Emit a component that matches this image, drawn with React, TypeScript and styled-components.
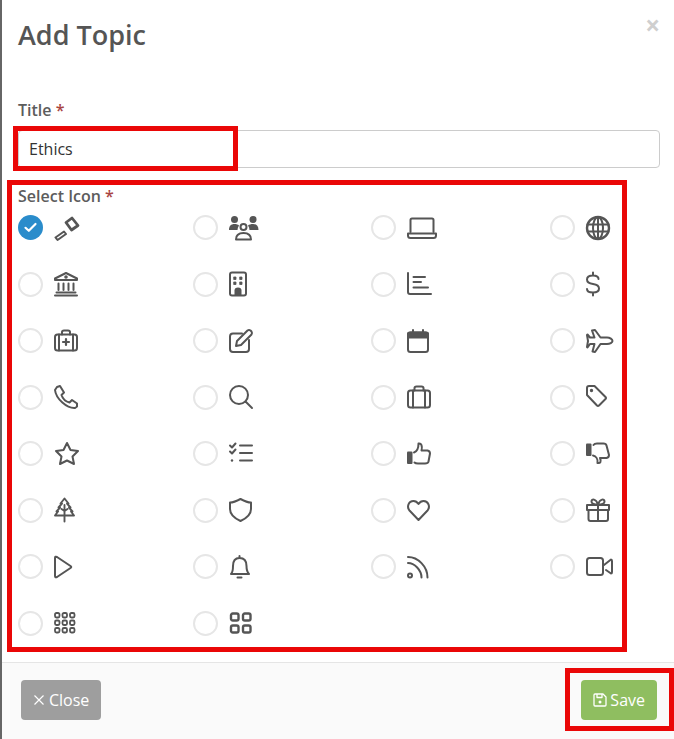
import { FC, ReactNode } from 'react'
import styled, { createGlobalStyle } from 'styled-components'

const GlobalStyle = createGlobalStyle`
  html, body {
    margin: 0;
    padding: 0;
    background: #666;
  }
  * {
    box-sizing: border-box;
  }
`

const Glyph: FC<{ children: ReactNode }> = ({ children }) => (
  <svg
    width={26}
    height={26}
    viewBox="0 0 26 26"
    fill="none"
    stroke="#555"
    strokeWidth="2"
    strokeLinecap="round"
    strokeLinejoin="round"
  >
    {children}
  </svg>
)

// hand drawn to follow the reference, all on a 26 box whose left edge is the icon's left edge
const icons: ReactNode[] = [
  <>
    <path d="M12 7.500 18 3 24 10.500 17.500 15Z" strokeWidth="2.800" />
    <path d="M1.500 22.500 10 16.500 12 19 3.500 25Z" strokeWidth="2" />
  </>,
  <>
    <circle cx="5.500" cy="4.500" r="3.500" fill="#555" stroke="none" />
    <circle cx="24" cy="4.500" r="3.500" fill="#555" stroke="none" />
    <path d="M0 15C0 11 2 9 5.500 9 7.500 9 9 9.500 10 10.500 9 12 8.500 13.500 8.500 15Z" fill="#555" stroke="none" />
    <path d="M20.500 15C20.500 13.500 20 12 19 10.500 20 9.500 22 9 24 9 27.500 9 29.500 11 29.500 15Z" fill="#555" stroke="none" />
    <circle cx="14.500" cy="12" r="3" />
    <path d="M7 24.500C7 20 10 18 14.500 18 19 18 22 20 22 24.500Z" />
  </>,
  <>
    <path d="M3.500 17V5Q3.500 3.500 5 3.500H25Q26.500 3.500 26.500 5V17" />
    <path d="M1 18.500H29V20.500Q29 23 26.500 23H3.500Q1 23 1 20.500Z" />
  </>,
  <>
    <circle cx="12" cy="13" r="11" strokeWidth="2.400" />
    <ellipse cx="12" cy="13" rx="5" ry="11" />
    <path d="M1.500 9.500H22.500M1.500 16.500H22.500M12 2V24" />
  </>,
  <>
    <path d="M1 7.500 12 2 23 7.500V9H1Z" />
    <path d="M4.500 12.500V19M9.500 12.500V19M14.500 12.500V19M19.500 12.500V19M2.500 21.500H21.500M1 24.500H23" />
    <circle cx="12" cy="6" r="0.800" fill="#555" />
  </>,
  <>
    <rect x="1" y="1.500" width="16" height="23" rx="2" />
    <path d="M5 6H7V8.500H5ZM11 6H13V8.500H11ZM5 11H7V13.500H5ZM11 11H13V13.500H11Z" fill="#555" stroke="#555" strokeWidth="0.800" />
    <path d="M5.500 24V19.500Q5.500 16.500 9 16.500 12.500 16.500 12.500 19.500V24Z" fill="#555" stroke="none" />
  </>,
  <>
    <path d="M1 2V21Q1 23 3 23H24" />
    <path d="M6.500 6H18M6.500 11H14M6.500 16.500H21" />
  </>,
  <>
    <path d="M12.500 8C12.500 5.500 10.500 4.500 7 4.500 3 4.500 1 6 1 8.500 1 11.500 3.500 12.500 7 13 10.500 13.500 13 14.500 13 17.500 13 20 11 21.500 7 21.500 3 21.500 1 20 1 18M7 1.500V4.500M7 21.500V24.500" />
  </>,
  <>
    <rect x="1" y="6.500" width="22" height="16" rx="2.500" />
    <path d="M8 6.500V4Q8 2.500 10 2.500H14Q16 2.500 16 4V6.500M5 6.500V22.500M19 6.500V22.500" />
    <path d="M12 11V17M9 14H15" strokeWidth="2.200" />
  </>,
  <>
    <path d="M13 5.500H4Q1 5.500 1 8.500V21Q1 24 4 24H17Q20 24 20 21V12" />
    <path d="M8 13 18.500 2.500Q20 1.500 21.500 2.500L22.500 3.500Q23.500 5 22.500 6.500L12 17 7 18Z" />
  </>,
  <>
    <rect x="1" y="4.500" width="20" height="19.500" rx="2.500" />
    <path d="M1 5.500Q1 4.500 3.500 4.500H18.500Q21 4.500 21 5.500V9.500H1Z" fill="#555" />
    <path d="M6 2V5M16 2V5" />
  </>,
  <>
    <path d="M6 2.500 9 2 14.500 9.500H21C24 9.500 26.500 11.500 26.500 13 26.500 14.500 24 16 21 16H14.500L9 24 6.500 23.500 8.500 16H4L1.500 19.500 1 19 2 13 1 7 1.500 6.500 4 9.500H8.500Z" />
  </>,
  <>
    <path d="M3 3 6 2 10 8.500 7.500 11C8.500 14 11.500 17.500 15.500 18.500L18 16 23 19.500 23 22.500 21 24C13 24.500 2 15 1 6Z" />
  </>,
  <>
    <circle cx="10" cy="11" r="9" />
    <path d="M16.500 17.500 23 24" />
  </>,
  <>
    <rect x="1" y="6.500" width="22" height="17" rx="2.500" />
    <path d="M7.500 6.500V4Q7.500 2.500 9.500 2.500H14.500Q16.500 2.500 16.500 4V6.500M6 6.500V23.500M18 6.500V23.500" />
  </>,
  <>
    <path d="M1 4Q1 2 3 2H8.500L19.500 13Q20.500 14 19.500 15L13 21.500Q12 22.500 11 21.500L1 11Z" />
    <circle cx="5.500" cy="6.500" r="0.700" fill="#555" />
  </>,
  <>
    <path d="M13 2 16.500 9 24 10 18.500 15.500 20 23 13 19.500 6 23 7.500 15.500 2 10 9.500 9Z" />
  </>,
  <>
    <path d="M1 4.500 3 6.500 6.500 2.500M1 10.500 3 12.500 6.500 8.500" />
    <path d="M11 4.500H23M11 12H23M11 19.500H23" />
    <circle cx="3" cy="19.500" r="1.200" fill="#555" stroke="none" />
  </>,
  <>
    <rect x="0" y="10.500" width="5.500" height="12.500" rx="1" fill="#555" stroke="none" />
    <path d="M7 11.500C10 10.500 11.500 8 11.500 2.500 14.500 2 15.500 5 14.500 9.500H20.500Q23 10 23 12.500L21.500 20.500Q21 22.500 18 22.500H11Q8.500 22.500 7.500 21.500" />
  </>,
  <>
    <rect x="0" y="2.500" width="5.500" height="12.500" rx="1" fill="#555" stroke="none" />
    <path d="M7 14.500C10 15 12 18 11.500 22 14.500 22.500 15.500 20.500 14 17H20.500Q23 16.500 23 14L20.500 4.500Q20 2.500 17.500 2.500H11Q8.500 2.500 7.500 4" />
  </>,
  <>
    <path d="M10.500 1.500 14.500 6.500H13L16.500 10.500H15L18.500 14.500H17L20 18.500H1L4 14.500H2.500L6 10.500H4.500L8 6.500H6.500ZM10.500 8V24.500M10.500 14 7.500 12M10.500 14 13.500 12" strokeWidth="1.900" />
  </>,
  <>
    <path d="M11.500 2Q5 5.500 1 5.500V12C1 17.500 6 21.500 11.500 24 17 21.500 22 17.500 22 12V5.500Q18 5.500 11.500 2Z" />
  </>,
  <>
    <path d="M11.500 23 2.500 13.500C-0.500 10 1.500 4 6.500 4 8.500 4 10.500 5.500 11.500 7 12.500 5.500 14.500 4 16.500 4 21.500 4 23.500 10 20.500 13.500Z" />
  </>,
  <>
    <path d="M2.500 13H22V22Q22 24 20 24H4.500Q2.500 24 2.500 22ZM1 8H23V13H1ZM12 8V24" />
    <path d="M12 7.500C9 7.500 5.500 6.500 5.500 4.500 5.500 1.500 10 1.500 12 7.500 14 1.500 18.500 1.500 18.500 4.500 18.500 6.500 15 7.500 12 7.500Z" />
  </>,
  <>
    <path d="M1 4Q1 2 3 3L16.500 12Q18 13 16.500 14L3 23Q1 24 1 22Z" />
  </>,
  <>
    <path d="M2 20C4 18 4 15.500 4 12 4 7 6 4 10.500 4 15 4 17.500 7 17.500 12 17.500 15.500 18 18 20 20H2ZM10.500 2V4M8.500 23.500H12.500" />
  </>,
  <>
    <path d="M1 3C11 3 20.500 12.500 20.500 23.500M1 9C7.500 9 14.500 16 14.500 23.500" />
    <circle cx="3" cy="21.500" r="2" />
  </>,
  <>
    <rect x="1" y="4" width="16" height="17" rx="2.500" />
    <path d="M18 11 25 5.500Q26 5.500 26 7V18Q26 19.500 25 19.500L20 16" />
  </>,
  <>
    <g strokeWidth="1.800">
      {[0, 7.5, 15].map(y =>
        [0, 7.5, 15].map(x => <rect key={`${x}-${y}`} x={x + 1} y={y + 3} width="4.500" height="4.500" rx="1.400" />)
      )}
    </g>
  </>,
  <>
    <g strokeWidth="2.400">
      {[0, 12].map(y =>
        [0, 12].map(x => <rect key={`${x}-${y}`} x={x + 2} y={y + 3.5} width="7.500" height="7" rx="1.800" />)
      )}
    </g>
  </>,
]

const CheckMark = () => (
  <svg width="13" height="11" viewBox="0 0 13 11" fill="none" stroke="#fff" strokeWidth="2.200" strokeLinecap="round" strokeLinejoin="round">
    <path d="M1.500 5.800 4.800 8.800 11.500 2" />
  </svg>
)

const Close = () => (
  <svg width="12" height="12" viewBox="0 0 12 12" stroke="#fff" strokeWidth="1.200">
    <path d="M1.500 1.500 10.500 10.500M10.500 1.500 1.500 10.500" />
  </svg>
)

const SaveGlyph = () => (
  <svg width="14" height="14" viewBox="0 0 14 14" fill="none" stroke="#fff" strokeWidth="1.300" strokeLinejoin="round">
    <path d="M1 2Q1 1 2 1H10L13 4V12Q13 13 12 13H2Q1 13 1 12Z" />
    <path d="M4 1V4.500H9V1" />
    <circle cx="7" cy="9" r="1.500" fill="#fff" stroke="none" />
  </svg>
)

export default function App() {
  return (
    <>
      <GlobalStyle />
      <Modal>
        <Header>
          <Heading>Add Topic</Heading>
          <Dismiss>×</Dismiss>
        </Header>
        <Body>
          <Label>
            Title <Required>*</Required>
          </Label>
          <Input readOnly value="Ethics" />
          <IconLabel>
            Select Icon <Required>*</Required>
          </IconLabel>
          <IconGrid>
            {icons.map((icon, i) => (
              <Option key={i}>
                <Radio $checked={i === 0}>{i === 0 && <CheckMark />}</Radio>
                <Glyph>{icon}</Glyph>
              </Option>
            ))}
          </IconGrid>
        </Body>
        <Footer>
          <Button $bg="#9e9e9e" $gap={4}>
            <Close />
            Close
          </Button>
          <Button $bg="#8fbe60" $gap={3}>
            <SaveGlyph />
            Save
          </Button>
        </Footer>
        <Mark $left={13} $top={126} $width={225} $height={45} />
        <Mark $left={7} $top={180} $width={620} $height={472} />
        <Mark $left={565} $top={668} $width={109} $height={63} />
      </Modal>
    </>
  )
}

const Modal = styled.div`
  position: relative;
  width: 672px;
  height: 739px;
  margin-left: 2px;
  background: #fff;
  display: flex;
  flex-direction: column;
  font-family: 'Open Sans', sans-serif;
  color: #555;
  overflow: hidden;
`
const Header = styled.div`
  flex: none;
  display: flex;
  justify-content: space-between;
  align-items: flex-start;
  height: 100px;
  padding: 16px 14px 0 16px;
`
const Heading = styled.h4`
  margin: 0;
  font-size: 27px;
  line-height: 38px;
  font-weight: 600;
  color: #555;
`
const Dismiss = styled.span`
  font-size: 26px;
  line-height: 18px;
  font-weight: 700;
  color: #cfcfcf;
`
const Body = styled.div`
  flex: 1;
  min-height: 0;
  padding: 0 14px 0 16px;
`
const Label = styled.div`
  font-size: 16px;
  line-height: 20px;
  font-weight: 600;
  color: #5c5c5c;
`
const IconLabel = styled(Label)`
  margin-top: 18px;
`
const Required = styled.span`
  color: #a94442;
`
const Input = styled.input`
  display: block;
  width: 100%;
  height: 38px;
  margin-top: 10px;
  padding: 0 10px;
  border: 1px solid #ccc;
  border-radius: 4px;
  font-family: inherit;
  font-size: 16px;
  color: #333;
  outline: none;
`
const IconGrid = styled.div`
  display: grid;
  grid-template-columns: 175px 178px 179px auto;
  grid-auto-rows: 56.5px;
  margin-top: 9px;
`
const Option = styled.div`
  display: flex;
  align-items: center;
  gap: 11px;
  height: 25px;
  svg {
    overflow: visible;
  }
`
const Radio = styled.span<{ $checked: boolean }>`
  display: flex;
  align-items: center;
  justify-content: center;
  flex: none;
  width: 25px;
  height: 25px;
  border-radius: 50%;
  border: ${p => (p.$checked ? 'none' : '2px solid #e6e6e6')};
  background: ${p => (p.$checked ? '#2a8ccb' : '#fff')};
`
const Footer = styled.div`
  flex: none;
  display: flex;
  justify-content: space-between;
  height: 77px;
  padding: 17px 17px 0 19px;
  border-top: 1px solid #e5e5e5;
  background: #fafafa;
`
const Button = styled.button<{ $bg: string; $gap: number }>`
  display: flex;
  align-items: center;
  gap: ${p => p.$gap}px;
  height: 40px;
  padding: 0 12px;
  border: none;
  border-radius: 4px;
  background: ${p => p.$bg};
  color: #fff;
  font-family: inherit;
  font-size: 16px;
  font-weight: 400;
`
const Mark = styled.div<{ $left: number; $top: number; $width: number; $height: number }>`
  position: absolute;
  left: ${p => p.$left - 2}px;
  top: ${p => p.$top}px;
  width: ${p => p.$width}px;
  height: ${p => p.$height}px;
  border: 5px solid #ea0707;
  pointer-events: none;
`
